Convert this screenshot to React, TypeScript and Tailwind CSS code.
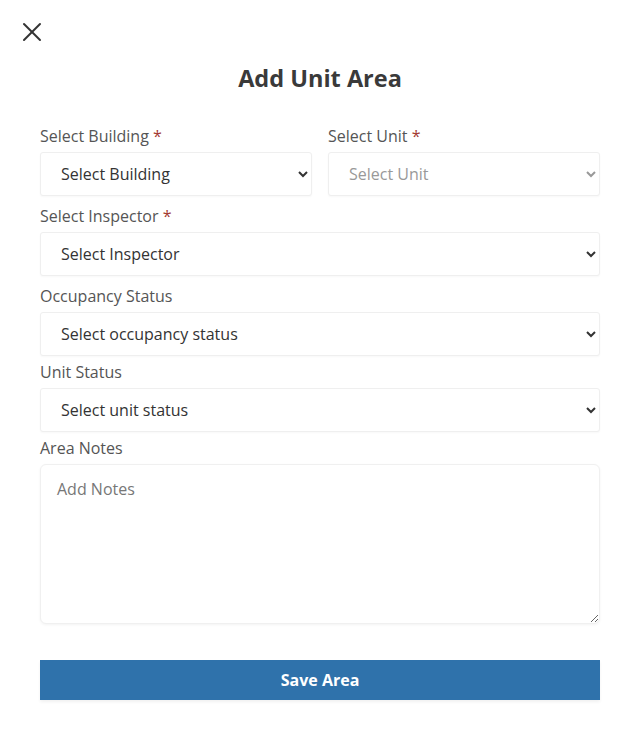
import { X } from 'lucide-react'

const selectCls =
  'block h-[44px] w-full rounded-[3px] border border-[#efefef] bg-white pl-[16px] pr-2 text-[16px] text-[#333] shadow-[0_1px_2px_rgba(0,0,0,0.03)] focus:outline-none'

function Label({ text, required }: { text: string; required?: boolean }) {
  return (
    <label className="mb-1 block text-[16px] leading-6 text-[#555]">
      {text} {required && <span className="text-[#a33a32]">*</span>}
    </label>
  )
}

export default function App() {
  return (
    <div className="min-h-[748px] bg-white font-['Open_Sans',sans-serif]">
      <div className="px-[40px] pt-[16px]">
        <button className="-ml-[24px] flex h-8 w-8 items-center justify-center text-[#333]">
          <X className="h-8 w-8" strokeWidth={1.5} />
        </button>
        <h2 className="mt-[14px] text-center text-[23.5px] font-bold leading-8 text-[#3a3a3a]">Add Unit Area</h2>

        <form className="mt-[30px]" onSubmit={e => e.preventDefault()}>
          <div className="grid grid-cols-2 gap-4">
            <div>
              <Label text="Select Building" required />
              <select className={selectCls} defaultValue="">
                <option value="">Select Building</option>
              </select>
            </div>
            <div>
              <Label text="Select Unit" required />
              <select disabled className={selectCls + ' bg-[#fafafa] disabled:text-[#999]'} defaultValue="">
                <option value="">Select Unit</option>
              </select>
            </div>
          </div>

          <div className="mt-2">
            <Label text="Select Inspector" required />
            <select className={selectCls} defaultValue="">
              <option value="">Select Inspector</option>
            </select>
          </div>

          <div className="mt-2">
            <Label text="Occupancy Status" />
            <select className={selectCls} defaultValue="">
              <option value="">Select occupancy status</option>
            </select>
          </div>

          <div className="mt-1">
            <Label text="Unit Status" />
            <select className={selectCls} defaultValue="">
              <option value="">Select unit status</option>
            </select>
          </div>

          <div className="mt-1">
            <Label text="Area Notes" />
            <textarea
              placeholder="Add Notes"
              className="block h-[160px] w-full rounded-[6px] border border-[#f0f0f0] bg-white px-4 py-3 text-[16px] text-[#333] shadow-[0_1px_3px_rgba(0,0,0,0.05)] placeholder:text-[#777] focus:outline-none"
            />
          </div>

          <button
            type="submit"
            className="mt-[36px] h-[40px] w-full bg-[#2f72ab] text-[16px] font-bold text-white shadow-[0_2px_3px_rgba(0,0,0,0.06)]"
          >
            Save Area
          </button>
        </form>
      </div>
    </div>
  )
}
